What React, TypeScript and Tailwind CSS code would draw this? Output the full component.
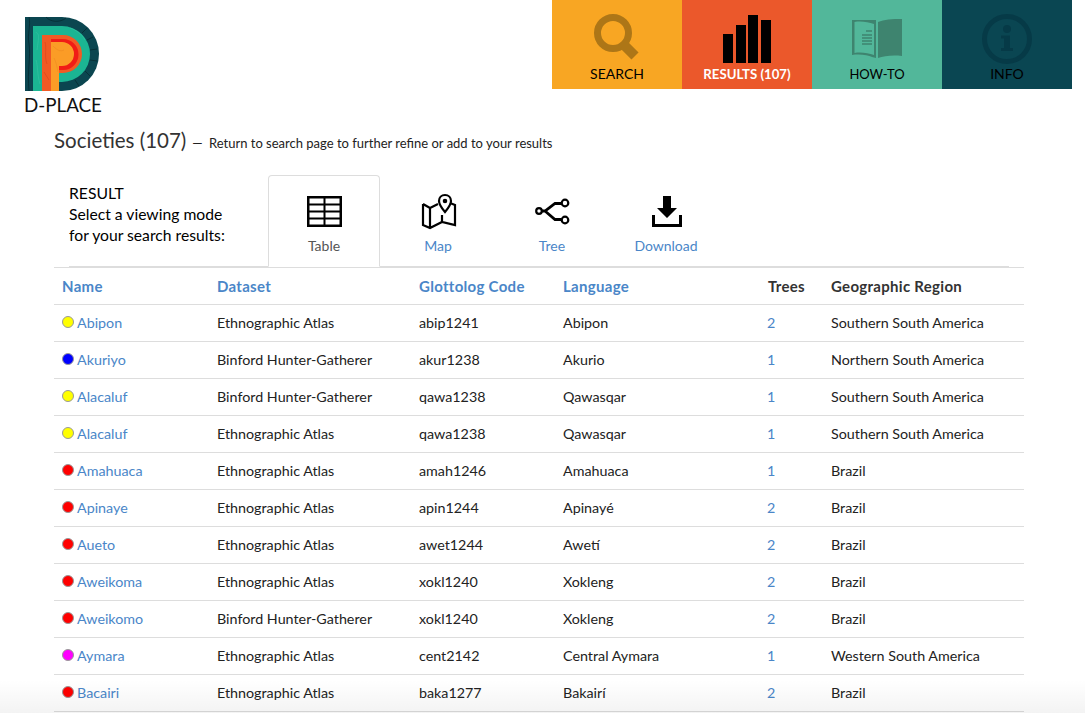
const rows = [
  { name: "Abipon", dot: "bg-[#ffff00]", dataset: "Ethnographic Atlas", code: "abip1241", lang: "Abipon", trees: 2, region: "Southern South America" },
  { name: "Akuriyo", dot: "bg-[#0000ff]", dataset: "Binford Hunter-Gatherer", code: "akur1238", lang: "Akurio", trees: 1, region: "Northern South America" },
  { name: "Alacaluf", dot: "bg-[#ffff00]", dataset: "Binford Hunter-Gatherer", code: "qawa1238", lang: "Qawasqar", trees: 1, region: "Southern South America" },
  { name: "Alacaluf", dot: "bg-[#ffff00]", dataset: "Ethnographic Atlas", code: "qawa1238", lang: "Qawasqar", trees: 1, region: "Southern South America" },
  { name: "Amahuaca", dot: "bg-[#ff0000]", dataset: "Ethnographic Atlas", code: "amah1246", lang: "Amahuaca", trees: 1, region: "Brazil" },
  { name: "Apinaye", dot: "bg-[#ff0000]", dataset: "Ethnographic Atlas", code: "apin1244", lang: "Apinayé", trees: 2, region: "Brazil" },
  { name: "Aueto", dot: "bg-[#ff0000]", dataset: "Ethnographic Atlas", code: "awet1244", lang: "Awetí", trees: 2, region: "Brazil" },
  { name: "Aweikoma", dot: "bg-[#ff0000]", dataset: "Ethnographic Atlas", code: "xokl1240", lang: "Xokleng", trees: 2, region: "Brazil" },
  { name: "Aweikomo", dot: "bg-[#ff0000]", dataset: "Binford Hunter-Gatherer", code: "xokl1240", lang: "Xokleng", trees: 2, region: "Brazil" },
  { name: "Aymara", dot: "bg-[#ff00ff]", dataset: "Ethnographic Atlas", code: "cent2142", lang: "Central Aymara", trees: 1, region: "Western South America" },
  { name: "Bacairi", dot: "bg-[#ff0000]", dataset: "Ethnographic Atlas", code: "baka1277", lang: "Bakairí", trees: 2, region: "Brazil" },
];

function Logo() {
  return (
    <svg width="76" height="76" viewBox="24 16 76 76">
      <path d="M25 17H62A37 37 0 0 1 62 91H25Z" fill="#0b4650" />
      <g fill="none" stroke="#05262c" strokeWidth="0.7">
        <path d="M29 17C31 26 27 34 29 44C31 56 27 70 29 91" />
        <path d="M46 17C50 22 60 23 66 18" />
        <path d="M82 33L87 28M87 40L93 37M90 50L97 49M90 60L97 61M85 71L90 76M75 80L79 86" />
      </g>
      <path d="M33 26H62A28 28 0 0 1 62 82H59V91H33Z" fill="#1bb593" />
      <g fill="none" stroke="#35c2a2" strokeWidth="0.6">
        <path d="M36 32C38 36 40 30 37 50M36 60C38 66 37 74 40 84M70 28C76 30 82 34 85 40" />
      </g>
      <path d="M42 35H63A19 19 0 0 1 63 73H59V91H42Z" fill="#f15a24" />
      <path d="M51 39H63A15.500 15.500 0 0 1 63 70H59V66H51Z" fill="#f11c16" />
      <path d="M51 42H62A12 12 0 0 1 62 66H59V91H51Z" fill="#fb9c26" />
      <g fill="none" stroke="#ef8a20" strokeWidth="0.6">
        <path d="M53 46C57 50 60 52 64 50M54 58C56 62 57 66 58 72" />
      </g>
      <g fill="none" stroke="#d8431a" strokeWidth="0.6">
        <path d="M45 42C47 48 44 56 47 64M44 72L49 80" />
      </g>
    </svg>
  );
}

function NavItem({ bg, label, labelClass, children }: { bg: string; label: string; labelClass: string; children: React.ReactNode }) {
  return (
    <a className={`relative flex h-[89px] w-[130px] flex-col items-center ${bg}`}>
      <svg width="130" height="66" viewBox="0 0 130 66" className="shrink-0">
        {children}
      </svg>
      <span className={`leading-4 ${labelClass}`}>{label}</span>
    </a>
  );
}

function Tab({ label, active, children }: { label: string; active?: boolean; children: React.ReactNode }) {
  return (
    <div
      className={`mr-[2px] flex h-[92px] w-[112px] flex-col items-center rounded-t border pt-[17px] ${
        active ? "border-[#ddd] border-b-white bg-white text-[#555]" : "border-transparent text-[#4a86c8]"
      }`}
    >
      <svg width="40" height="38" viewBox="0 0 40 38" className="shrink-0">
        {children}
      </svg>
      <span className="mt-[5px] text-[14px] leading-5">{label}</span>
    </div>
  );
}

export default function App() {
  return (
    <div className="relative h-[713px] w-full overflow-hidden bg-white font-['Lato','Liberation_Sans',sans-serif] text-[#222]">
      <header className="flex h-[113px] justify-between pr-[13px]">
        <div className="pt-4 pl-6">
          <Logo />
          <div className="mt-[1px] text-[18.800px] leading-6 text-[#111]">D-PLACE</div>
        </div>
        <nav className="flex self-start">
          <NavItem bg="bg-[#f8a623]" label="SEARCH" labelClass="text-[14px] text-black">
            <g fill="none" stroke="#ad7617">
              <circle cx="61" cy="33" r="15.500" strokeWidth="7" />
              <path d="M72 45L83 56" strokeWidth="10" />
            </g>
          </NavItem>
          <NavItem bg="bg-[#eb582b]" label="RESULTS (107)" labelClass="text-[13.200px] font-bold text-white">
            <g fill="#000">
              <rect x="41" y="34" width="10" height="29" />
              <rect x="54" y="25" width="10" height="38" />
              <rect x="66" y="15" width="10" height="48" />
              <rect x="79" y="20" width="10" height="43" />
            </g>
          </NavItem>
          <NavItem bg="bg-[#52b79a]" label="HOW-TO" labelClass="text-[13px] text-black">
            <path d="M40 20H64V58L60 57C56 55 48 54 40 55ZM42.500 22V53C49 52 56 53 62 55V24C56 22 49 21 42.500 22Z" fill="#3e846f" fillRule="evenodd" />
            <path d="M66 58V22C72 19.500 80 19 90 19V56C80 55 72 56 66 58Z" fill="#3e846f" />
            <path d="M54 31H60M50 35H60M50 38H60M50 41H60M50 44H60" stroke="#3e846f" strokeWidth="1.500" />
          </NavItem>
          <NavItem bg="bg-[#0a4652]" label="INFO" labelClass="text-[14px] text-black">
            <circle cx="65" cy="39" r="22.500" fill="none" stroke="#063a47" strokeWidth="5" />
            <circle cx="65" cy="29" r="4" fill="#063a47" />
            <path d="M59 35.500H68V48H71V51H59V48H62V38.500H59Z" fill="#063a47" />
          </NavItem>
        </nav>
      </header>

      <main className="px-[54px]">
        <h1 className="flex items-baseline text-[20.500px] leading-[54px] text-[#333]">
          Societies (107)
          <span className="ml-[6px] text-[13px] text-[#222]">
            <span className="mr-[3px]">—</span> Return to search page to further refine or add to your results
          </span>
        </h1>

        <div className="mt-[5px] mr-[22px] ml-[15px] flex h-[92px] items-start border-b border-[#ddd]">
          <p className="w-[199px] pt-[8px] text-[15.700px] leading-[21px] text-black">
            RESULT
            <br />
            Select a viewing mode
            <br />
            for your search results:
          </p>
          <Tab label="Table" active>
            <g fill="none" stroke="#000" strokeWidth="2.500">
              <rect x="4.250" y="4.250" width="32.500" height="28.500" />
              <path d="M4 11.500H37M4 18.500H37M4 25.500H37M20.500 4V33" strokeWidth="2" />
            </g>
          </Tab>
          <Tab label="Map">
            <g fill="none" stroke="#000" strokeWidth="2.200">
              <path d="M5 11L12 15L20 11M12 15V35M5 11V32L12 35L24 29L37 32V12L32 10M24 22V29" />
              <path d="M27 2C23.500 2 21 4.500 21 8C21 12 27 19 27 19C27 19 33 12 33 8C33 4.500 30.500 2 27 2Z" />
              <circle cx="27" cy="8" r="1.200" fill="#000" />
            </g>
          </Tab>
          <Tab label="Tree">
            <g fill="none" stroke="#000" strokeWidth="2.200">
              <circle cx="7" cy="18" r="2.800" />
              <circle cx="33" cy="10" r="3.300" />
              <circle cx="33" cy="27" r="3.300" />
              <path d="M10 18H13L23 10.500H29.500M13 18L23 26.500H29.500" strokeWidth="2.800" />
            </g>
          </Tab>
          <Tab label="Download">
            <path d="M17 3H25V15H31L21 25L11 15H17Z" fill="#000" />
            <path d="M6 22V34H36V22H33V31H9V22Z" fill="#000" />
          </Tab>
        </div>

        <table className="w-[970px] table-fixed border-collapse border-t border-[#ddd] text-[14.300px]">
          <colgroup>
            <col className="w-[155px]" />
            <col className="w-[202px]" />
            <col className="w-[144px]" />
            <col className="w-[205px]" />
            <col className="w-[63px]" />
            <col />
          </colgroup>
          <thead>
            <tr className="h-[37px] border-b border-[#ddd] text-left text-[15px] font-bold tracking-[0.3px]">
              <th className="pl-2 text-[#4a86c8]">Name</th>
              <th className="pl-2 text-[#4a86c8]">Dataset</th>
              <th className="pl-2 text-[#4a86c8]">Glottolog Code</th>
              <th className="pl-2 text-[#4a86c8]">Language</th>
              <th className="pl-2 text-[#333]">Trees</th>
              <th className="pl-2 text-[#333]">Geographic Region</th>
            </tr>
          </thead>
          <tbody>
            {rows.map((r, i) => (
              <tr key={i} className="h-[37px] border-b border-[#ddd]">
                <td className="pl-2">
                  <span className="flex items-center gap-[3px] text-[#4a86c8]">
                    <span className={`-mt-[2px] size-3 rounded-full border border-[#999] ${r.dot}`} />
                    {r.name}
                  </span>
                </td>
                <td className="pl-2">{r.dataset}</td>
                <td className="pl-2">{r.code}</td>
                <td className="pl-2">{r.lang}</td>
                <td className="pl-[7px] text-[#4a86c8]">{r.trees}</td>
                <td className="pl-2">{r.region}</td>
              </tr>
            ))}
          </tbody>
        </table>
      </main>

      <div className="pointer-events-none absolute inset-x-0 bottom-0 h-[33px] bg-gradient-to-b from-transparent to-[#0000000c]" />
    </div>
  );
}
